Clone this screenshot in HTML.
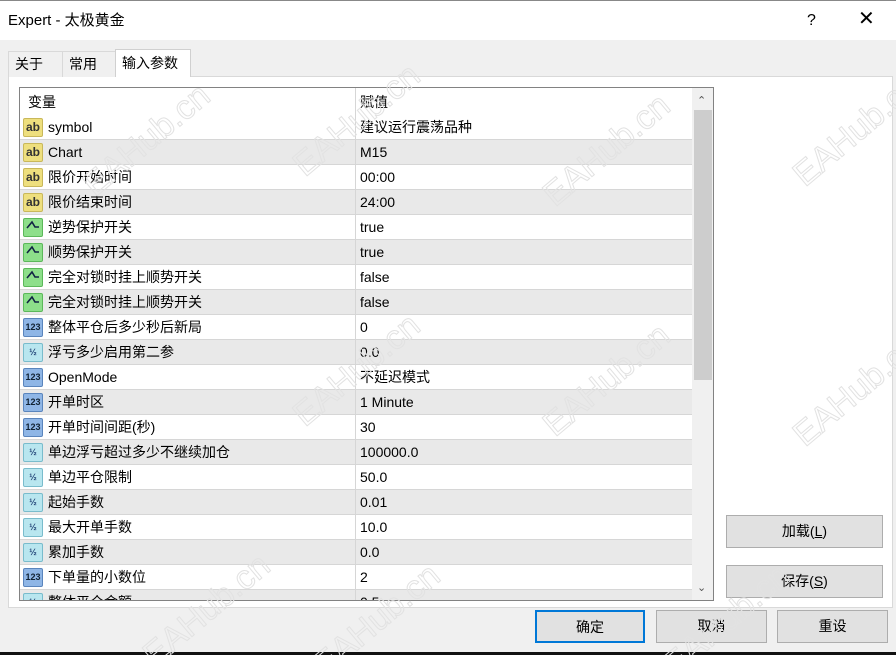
<!DOCTYPE html>
<html><head><meta charset="utf-8"><style>
*{margin:0;padding:0;box-sizing:border-box}
html,body{width:896px;height:655px;overflow:hidden}
body{background:#f0f0f0;font-family:"Liberation Sans","Noto Sans CJK SC",sans-serif;font-size:14px;line-height:17px;color:#000;position:relative}
.title{position:absolute;left:0;top:0;width:896px;height:40px;background:#fff;border-top:1px solid #888}
.title span{position:absolute;left:8px;top:11px;font-size:15px;line-height:18px}
.tab{position:absolute;top:51px;height:26px;border:1px solid #d9d9d9;border-bottom:none;background:#f0f0f0;padding:5px 0 0 6px}
.panel{position:absolute;left:8px;top:76px;width:885px;height:532px;background:#fff;border:1px solid #d9d9d9}
.list{position:absolute;left:19px;top:87px;width:695px;height:514px;border:1px solid #828282;background:#fff;overflow:hidden}
.row{position:absolute;left:0;width:672px;height:25px;border-bottom:1px solid #d6d6d6}
.row.g{background:#e9e9e9}
.row .n{position:absolute;left:28px;top:4px}
.row .v{position:absolute;left:340px;top:4px}
.row .d{position:absolute;left:335px;top:0;width:1px;height:25px;background:#d6d6d6}
.ic{position:absolute;left:3px;top:3px;width:20px;height:19px;border-radius:2px;font-size:10px;font-weight:bold;text-align:center;line-height:17px}
.ab{background:#eedf7e;border:1px solid #c9b85a;color:#333;font-size:12px}
.tg{background:#8ddf8a;border:1px solid #5cb85a}
.n3{background:#8fb6e6;border:1px solid #5a85bd;color:#123;font-size:9px}
.h2{background:#b8e6ef;border:1px solid #79bccc;color:#247;font-size:9px}
.sb{position:absolute;left:672px;top:0;width:21px;height:512px;background:#f0f0f0}
.btn{position:absolute;height:33px;background:#e1e1e1;border:1px solid #adadad;text-align:center;line-height:31px;font-size:14px}
.wm{position:absolute;color:transparent;-webkit-text-stroke:1px #e2e2e2;font-size:34px;line-height:40px;transform:rotate(-40deg);font-family:"Liberation Sans",sans-serif;white-space:nowrap}
</style></head><body>
<div class="title"><span>Expert - 太极黄金</span>
<span style="left:807px;top:11px;font-size:16px">?</span>
<span style="left:858px;top:9px;font-size:20px;font-weight:200">✕</span></div>
<div class="panel"></div>
<div class="tab" style="left:8px;width:55px;padding-top:4px">关于</div>
<div class="tab" style="left:62px;width:54px;padding-top:4px">常用</div>
<div class="tab" style="left:115px;top:49px;height:28px;width:76px;background:#fff;border-color:#d0d0d0">输入参数</div>
<div class="list">
<div style="position:absolute;left:8px;top:6px">变量</div>
<div style="position:absolute;left:340px;top:6px">赋值</div>
<div style="position:absolute;left:335px;top:0;width:1px;height:27px;background:#d6d6d6"></div>
<div id="rows"></div>
<div class="sb"><div style="position:absolute;left:5px;top:5px;font-size:11px;color:#555">⌃</div>
<div style="position:absolute;left:2px;top:22px;width:18px;height:270px;background:#cdcdcd"></div>
<div style="position:absolute;left:5px;top:492px;font-size:11px;color:#555">⌄</div></div>
</div>
<div class="btn" style="left:726px;top:515px;width:157px">加载(<u>L</u>)</div>
<div class="btn" style="left:726px;top:565px;width:157px">保存(<u>S</u>)</div>
<div class="btn" style="left:535px;top:610px;width:110px;border:2px solid #0078d7">确定</div>
<div class="btn" style="left:656px;top:610px;width:111px">取消</div>
<div class="btn" style="left:777px;top:610px;width:111px">重设</div>
<div style="position:absolute;left:0;top:652px;width:896px;height:3px;background:#111"></div>
<div class="wm" style="left:70px;top:120px">EAHub.cn</div>
<div class="wm" style="left:280px;top:100px">EAHub.cn</div>
<div class="wm" style="left:530px;top:130px">EAHub.cn</div>
<div class="wm" style="left:780px;top:110px">EAHub.cn</div>
<div class="wm" style="left:280px;top:350px">EAHub.cn</div>
<div class="wm" style="left:530px;top:360px">EAHub.cn</div>
<div class="wm" style="left:780px;top:370px">EAHub.cn</div>
<div class="wm" style="left:130px;top:590px">EAHub.cn</div>
<div class="wm" style="left:300px;top:600px">EAHub.cn</div>
<div class="wm" style="left:650px;top:600px">EAHub.cn</div>
<script>
var d=[["ab","symbol","建议运行震荡品种"],["ab","Chart","M15"],["ab","限价开始时间","00:00"],["ab","限价结束时间","24:00"],["tg","逆势保护开关","true"],["tg","顺势保护开关","true"],["tg","完全对锁时挂上顺势开关","false"],["tg","完全对锁时挂上顺势开关","false"],["n3","整体平仓后多少秒后新局","0"],["h2","浮亏多少启用第二参","0.0"],["n3","OpenMode","不延迟模式"],["n3","开单时区","1 Minute"],["n3","开单时间间距(秒)","30"],["h2","单边浮亏超过多少不继续加仓","100000.0"],["h2","单边平仓限制","50.0"],["h2","起始手数","0.01"],["h2","最大开单手数","10.0"],["h2","累加手数","0.0"],["n3","下单量的小数位","2"],["h2","整体平仓金额","0.5"]];
var t={ab:"ab",tg:"<svg width='14' height='10' viewBox='0 0 14 10'><path d='M1 8 L6 2 L9 7 L13 7' stroke='#124' stroke-width='1.6' fill='none'/></svg>",n3:"123",h2:"½"};
var h="";d.forEach(function(r,i){h+='<div class="row'+(i%2?' g':'')+'" style="top:'+(27+i*25)+'px"><div class="ic '+r[0]+'">'+t[r[0]]+'</div><span class="n">'+r[1]+'</span><div class="d"></div><span class="v">'+r[2]+'</span></div>'});
document.getElementById("rows").innerHTML=h;
</script>
</body></html>
